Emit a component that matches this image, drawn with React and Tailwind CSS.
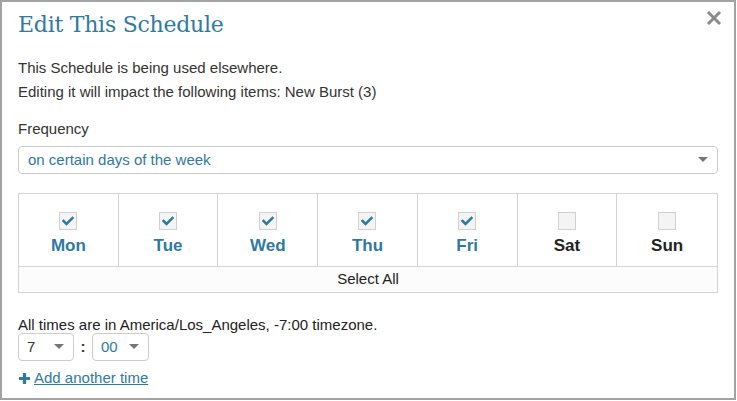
import { useState } from 'react';

const DAYS = [
  { label: 'Mon', on: true },
  { label: 'Tue', on: true },
  { label: 'Wed', on: true },
  { label: 'Thu', on: true },
  { label: 'Fri', on: true },
  { label: 'Sat', on: false },
  { label: 'Sun', on: false },
];

const Caret = () => (
  <svg width="10" height="6" viewBox="0 0 10 6" className="shrink-0">
    <path d="M0 0 L10 0 L5 5 Z" fill="#777" />
  </svg>
);

const Check = () => (
  <svg width="12" height="10" viewBox="0 0 12 10">
    <path d="M1.5 5 L4.5 8 L10.5 2" fill="none" stroke="#2d7aa1" strokeWidth="2.6" strokeLinecap="square" />
  </svg>
);

const App = () => {
  const [days, setDays] = useState(DAYS);

  return (
    <div className="w-[737px] h-[401px] bg-white font-['Liberation_Sans',Arial,sans-serif] text-[#333]">
      <div className="relative w-[736px] h-[400px] border-2 border-[#a3a3a3] px-[16px]">
        {/* Close */}
        <button className="absolute right-[12px] top-[8px]">
          <svg width="16" height="16" viewBox="0 0 16 16">
            <path d="M2 2 L14 14 M14 2 L2 14" stroke="#8a8a8a" strokeWidth="3" />
          </svg>
        </button>

        <h2 className="pt-[9px] text-[22px] leading-[28px] text-[#2e7aa0] font-['DejaVu_Serif',serif] tracking-[-0.25px]">
          Edit This Schedule
        </h2>

        <p className="mt-[21px] text-[15px] leading-[16px]">This Schedule is being used elsewhere.</p>
        <p className="mt-[8px] text-[15px] leading-[16px]">Editing it will impact the following items: New Burst (3)</p>

        <p className="mt-[21px] text-[15px] leading-[16px]">Frequency</p>
        <div className="mt-[9px] h-[28px] border border-[#ccc] rounded-[4px] flex items-center justify-between pl-[9px] pr-[9px]">
          <span className="text-[15px] text-[#2e7aa0]">on certain days of the week</span>
          <Caret />
        </div>

        {/* Day picker */}
        <div className="mt-[19px] border border-[#d4d4d4]">
          <div className="grid grid-cols-7 h-[72px]">
            {days.map((d, i) => (
              <button
                key={d.label}
                onClick={() => setDays(days.map((x, j) => (j === i ? { ...x, on: !x.on } : x)))}
                className={`flex flex-col items-center pt-[18px] ${i < 6 ? 'border-r border-[#d4d4d4]' : ''}`}
              >
                <span className="w-[18px] h-[18px] bg-[#f4f4f4] border border-[#d0d0d0] flex items-center justify-center">
                  {d.on && <Check />}
                </span>
                <span className={`mt-[6px] text-[17px] leading-[20px] font-bold ${d.on ? 'text-[#2e7aa0]' : 'text-[#222]'}`}>
                  {d.label}
                </span>
              </button>
            ))}
          </div>
          <div className="h-[26px] border-t border-[#d4d4d4] bg-[#fcfcfc] flex items-center justify-center text-[15px] text-[#222]">
            Select All
          </div>
        </div>

        <p className="mt-[24px] text-[15px] leading-[16px] text-[#222]">All times are in America/Los_Angeles, -7:00 timezone.</p>
        <div className="mt-[0px] flex items-center">
          <div className="w-[56px] h-[28px] border border-[#ccc] rounded-[4px] flex items-center justify-between pl-[8px] pr-[9px]">
            <span className="text-[15px] text-[#333]">7</span>
            <Caret />
          </div>
          <span className="w-[18px] text-center text-[15px] font-bold">:</span>
          <div className="w-[57px] h-[28px] border border-[#ccc] rounded-[4px] flex items-center justify-between pl-[8px] pr-[9px]">
            <span className="text-[15px] text-[#2e7aa0]">00</span>
            <Caret />
          </div>
        </div>
        <a href="#" className="mt-[6px] inline-flex items-center gap-[3px] text-[15px] text-[#2e7aa0]">
          <svg width="13" height="13" viewBox="0 0 13 13">
            <path d="M6.5 1 V12 M1 6.5 H12" stroke="#2e7aa0" strokeWidth="3.2" />
          </svg>
          <span className="underline">Add another time</span>
        </a>
      </div>
    </div>
  );
};

export default App;
